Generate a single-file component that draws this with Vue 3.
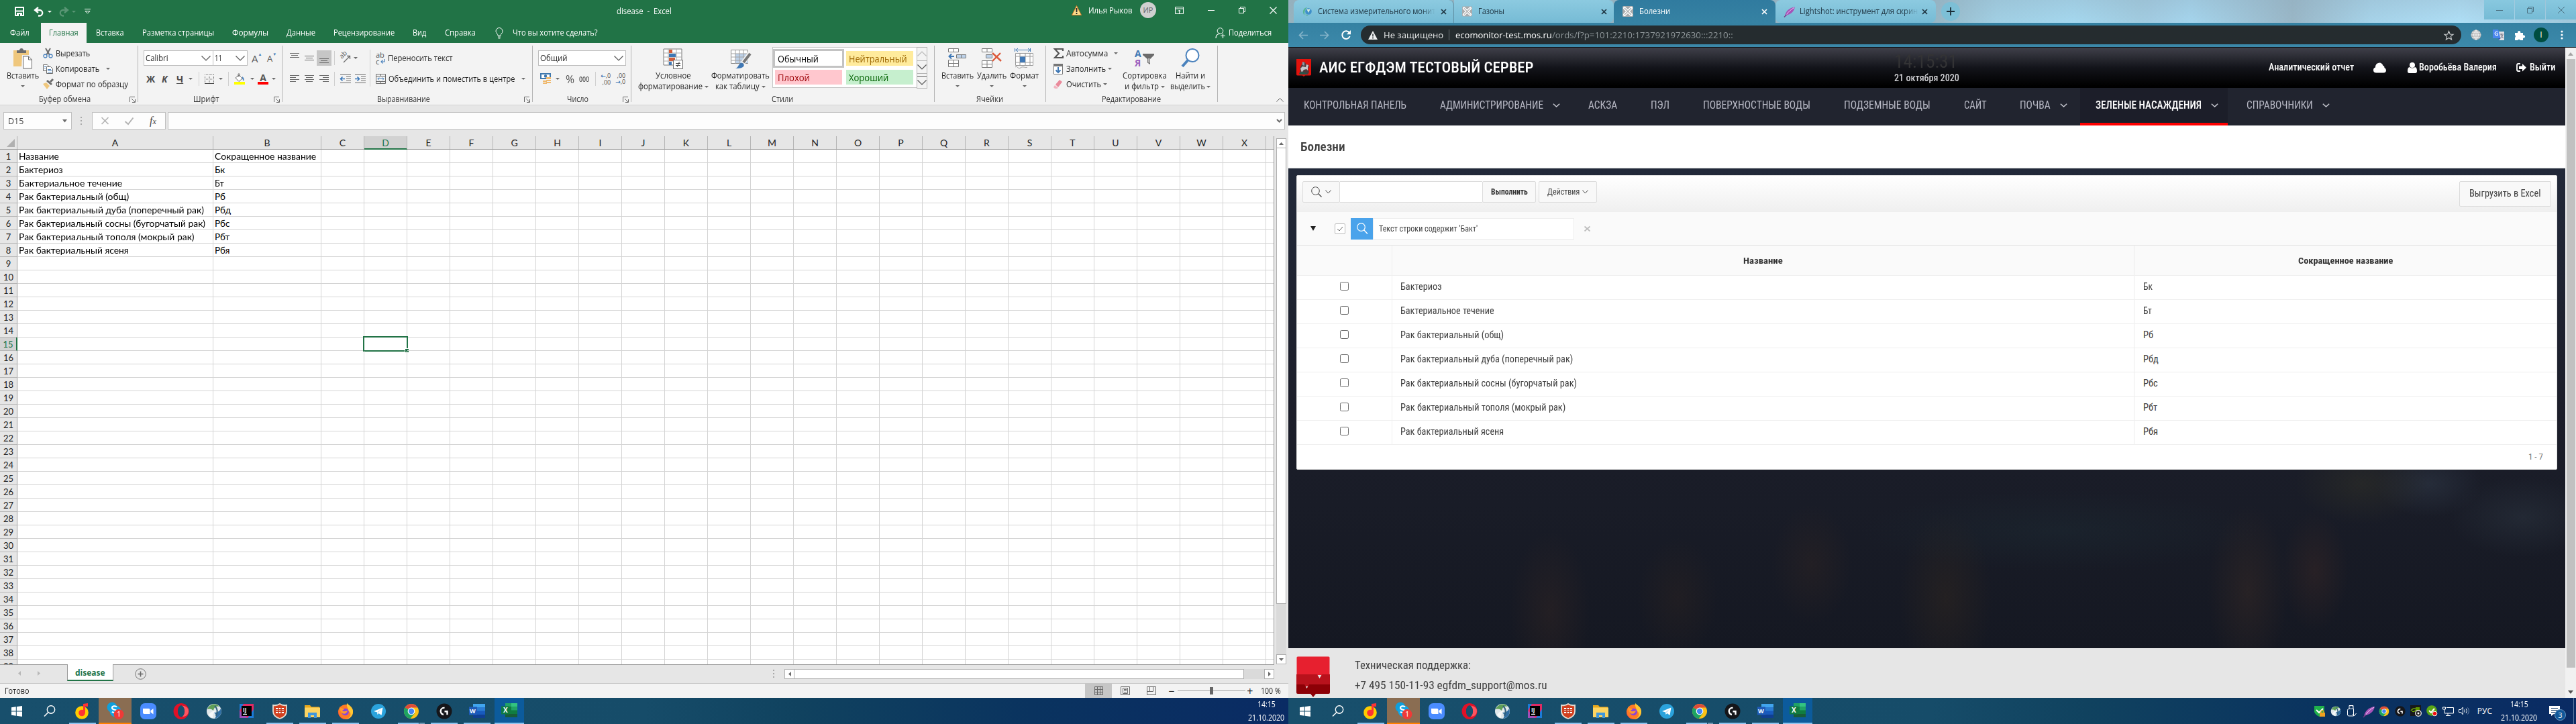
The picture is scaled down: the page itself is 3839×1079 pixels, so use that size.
<script setup>
import { h } from 'vue'

// Scales a piece of text horizontally to the width given in pixels.
const vFit = {
  mounted(el, binding) {
    if (!binding.value) return
    const natural = el.offsetWidth
    el.style.transform = `scaleX(${binding.value / natural})`
    el.style.marginRight = `${binding.value - natural}px`
  }
}

const g = '#6b6b6b'
const lines = (rows, s = g) => rows.map(([x1, x2, y]) => `<path d="M${x1} ${y}H${x2}" stroke="${s}"/>`).join('')
const chromeInner = '<circle cx="12" cy="12" r="11" fill="#fbc116"/><path d="M12 12 2.5 6.4A11 11 0 0 1 21.5 6.5H12z" fill="#dd4b3a"/><path d="M12 12 2.5 6.4A11 11 0 0 0 10.5 23L17 15z" fill="#1da462"/><circle cx="12" cy="12" r="5.4" fill="#fff"/><circle cx="12" cy="12" r="4.2" fill="#4285f4"/>'
const logi = '<circle cx="12" cy="12" r="11.5" fill="#15161a"/><path d="M12.500 7a5 5 0 0 0-1.500 10M12.500 12.300H16.500v5" fill="none" stroke="#fff" stroke-width="2.4"/>'
const swirl = '<circle cx="12" cy="12" r="11" fill="#dfe7ea"/><path d="M2 9C5 1 15-1 20 5c-6-1-8 2-9 6-3-3-6-3-9-2z" fill="#5f9f58"/><path d="M22 8c3 7-2 14-9 15 3-4 2-6-1-9 5 0 8-2 10-6z" fill="#2e6ea3"/><path d="M4 17c4-5 7-6 11-6-4 3-5 6-5 11-3-1-5-3-6-5z" fill="#f6f8f8"/><path d="M13 4c4 4 5 9 2 15" stroke="#33607a" fill="none" stroke-width="2"/>'
const feather = '<path d="M2 16C3 8 9 2 18 1c-1 6-5 11-13 13z" fill="#a552b8"/><path d="M4 14C8 8 12 5 17 2" stroke="#f0d4f5" fill="none"/><path d="M1 17l4-4" stroke="#713883" stroke-width="1.4"/>'
const cross = '<rect width="16" height="16" rx="1.5" fill="#a9abad"/><path d="M3 3l10 10M13 3 3 13" stroke="#fff" stroke-width="4.2" stroke-linecap="round"/><path d="M3 3l10 10M13 3 3 13" stroke="#a9abad" stroke-width="1.3"/>'

const icons = {
  save: [14, 14, '<path d="M1 1h12v12H1z" fill="none" stroke="#fff" stroke-width="2"/><path d="M2 6.5h10" stroke="#fff" stroke-width="2"/><path d="M3 9h8v5H3z" fill="#fff"/><path d="M6 11h2v3H6z" fill="#217346"/>'],
  undo: [16, 15, '<path d="M7 1 2 5l5 4M2.500 5H9a4 4 0 0 1 0 8.500H7" fill="none" stroke="#fff" stroke-width="2.300"/>'],
  redo: [16, 15, '<path d="M9 1l5 4-5 4M13.500 5H7a4 4 0 0 0 0 8.500h1" fill="none" stroke="#5a9675" stroke-width="2.300"/>'],
  qat: [9, 8, '<path d="M0 .5h9" stroke="#fff"/><path d="M1 3.500h7L4.500 7z" fill="none" stroke="#fff"/>'],
  dnW: [6, 3, '<path d="M0 0h6L3 3z" fill="#fff"/>'],
  dnF: [6, 3, '<path d="M0 0h6L3 3z" fill="#5a9675"/>'],
  dn: [6, 3, '<path d="M0 0h6L3 3z" fill="#6b6b6b"/>'],
  dnL: [7, 5, '<path d="M0 0h7L3.500 4.500z" fill="#6b6b6b"/>'],
  upT: [7, 4, '<path d="M0 4h7L3.500 0z" fill="#6b6b6b"/>'],
  dnT: [7, 4, '<path d="M0 0h7L3.500 4z" fill="#6b6b6b"/>'],
  lfT: [4, 7, '<path d="M4 0v7L0 3.500z" fill="#6b6b6b"/>'],
  rtT: [4, 7, '<path d="M0 0v7l4-3.500z" fill="#6b6b6b"/>'],
  lfF: [4, 7, '<path d="M4 0v7L0 3.500z" fill="#b8b8b8"/>'],
  rtF: [4, 7, '<path d="M0 0v7l4-3.500z" fill="#b8b8b8"/>'],
  warn: [15, 15, '<path d="M7.500.5 14.500 14.500H.5z" fill="#fbdc8c" stroke="#d97b24"/><path d="M7.500 4v6M7.500 11v2" stroke="#222" stroke-width="1.800"/>'],
  ribbonOpt: [13, 11, '<path d="M.5.5h12v10H.5zM.5 3h12M6.500 10V5M4.500 7l2-2 2 2" fill="none" stroke="#fff"/>'],
  min: [10, 10, '<path d="M0 5.500h10" stroke="#fff"/>'],
  restore: [10, 10, '<path d="M.5 2.500h7v7h-7zM2.500 2V.5h7v7H8" fill="none" stroke="#fff"/>'],
  close: [11, 11, '<path d="M.5.5l10 10M10.500.5l-10 10" stroke="#fff" stroke-width="1.200"/>'],
  bulb: [12, 17, '<path d="M4 12c0-2.500-3-3.500-3-6.500a5 5 0 0 1 10 0C11 8.500 8 9.500 8 12zM4 14h4M4.500 16h3" fill="none" stroke="#fff"/>'],
  share: [16, 16, '<circle cx="7.500" cy="5" r="4.300" fill="none" stroke="#fff"/><path d="M1 16c0-4 2-6.500 6-6.500M11.500 9v7M8 12.500h7" fill="none" stroke="#fff" stroke-width="1.200"/>'],
  paste: [29, 31, '<path d="M0 3h23v24H0z" fill="#efc77d"/><path d="M5 7V3h4c0-4 6-4 6 0h4v4z" fill="#6b6b6b"/><path d="M13 10h14l1 20H12z" fill="#f3f3f3"/><path d="M14.500 12h8l5 5v13h-13z" fill="#fff" stroke="#6b6b6b"/><path d="M22.500 12v5h5" fill="none" stroke="#6b6b6b"/>'],
  cut: [15, 15, '<path d="M4 0l6 10M11 0 5 10" stroke="#6b6b6b" stroke-width="2"/><circle cx="3.500" cy="11.500" r="2.500" fill="none" stroke="#4a82bd" stroke-width="1.300"/><circle cx="11.500" cy="11.500" r="2.500" fill="none" stroke="#4a82bd" stroke-width="1.300"/>'],
  copy: [15, 14, '<path d="M.5.5h6l2 2v7h-8z" fill="#fff" stroke="#6b6b6b"/><path d="M5.500 3.500h6l3 3v7h-9z" fill="#fff" stroke="#6b6b6b"/><path d="M7 7.500h5M7 9.500h6M7 11.500h6M2 3.500h3M2 5.500h2" stroke="#4a82bd"/>'],
  brush: [16, 15, '<path d="M0 7l5-2 5 5-4 5z" fill="#efc77d"/><path d="M5 3l7 6 2-2-7-6z" fill="#6b6b6b"/><path d="M11 4l4-4" stroke="#6b6b6b" stroke-width="3"/>'],
  launch: [9, 9, '<path d="M.5 8V.5H8M3 3l5 5M8.500 4v4.500H4" fill="none" stroke="#666"/>'],
  chev: [14, 8, '<path d="M.5.5 7 7l6.500-6.500" fill="none" stroke="#555" stroke-width="1.200"/>'],
  chevUpF: [14, 8, '<path d="M.5 7.500 7 1l6.500 6.500" fill="none" stroke="#b9b9b9" stroke-width="1.200"/>'],
  chevUp: [11, 6, '<path d="M.5 5.500 5.500.5l5 5" fill="none" stroke="#555"/>'],
  borders: [14, 14, '<path d="M.5 0v13M13.500 0v13M0 .5h14M7 0v13M0 7h14" stroke="#777" stroke-dasharray="1 1"/><path d="M0 13.500h14" stroke="#444"/>'],
  fill: [16, 16, '<path d="M2 6l5-4 5 5-5 4.500zM6 5V0h2v4" fill="#fff" stroke="#6b6b6b"/><path d="M12 4q4 3 2 7l-2-4z" fill="#4a82bd"/><path d="M0 12h16v4H0z" fill="#ff0"/>'],
  wrap: [7, 9, '<path d="M6 1v4H1m2.500-2.500L1 5l2.500 2.500" fill="none" stroke="#4a82bd" stroke-width="1.200"/>'],
  merge: [15, 15, '<path d="M.5.500h14v14H.5zM.5 3.500h14M.5 11.500h14M7.500 0v3M7.500 12v3" fill="none" stroke="#6b6b6b"/><path d="M3 7.500h9M5 5.500l-2 2 2 2M10 5.500l2 2-2 2" fill="none" stroke="#4a82bd"/>'],
  alT: [14, 8, lines([[0, 14, 0.5], [2, 12, 3.5], [0, 14, 6.5]])],
  alL: [14, 11, lines([[0, 14, 0.5], [0, 9, 3.5], [0, 14, 6.5], [0, 9, 9.5]])],
  alC: [14, 11, lines([[0, 14, 0.5], [2, 12, 3.5], [0, 14, 6.5], [2, 12, 9.5]])],
  alR: [14, 11, lines([[0, 14, 0.5], [5, 14, 3.5], [0, 14, 6.5], [5, 14, 9.5]])],
  indL: [16, 14, lines([[0, 16, 0.5], [9, 16, 3.5], [9, 16, 6.5], [9, 16, 9.5], [0, 16, 12.5]]) + '<path d="M1 6.500h6M3.500 3.500l-3 3 3 3" fill="none" stroke="#3a77b8" stroke-width="1.600"/>'],
  indR: [16, 14, lines([[0, 16, 0.5], [9, 16, 3.5], [9, 16, 6.5], [9, 16, 9.5], [0, 16, 12.5]]) + '<path d="M0 6.500h6M3.500 3.500l3 3-3 3" fill="none" stroke="#3a77b8" stroke-width="1.600"/>'],
  orient: [16, 15, '<path d="M5 14 14.500 4.500M14.500 9V4.500H10" fill="none" stroke="#6b6b6b" stroke-width="1.300"/>'],
  money: [17, 17, '<path d="M0 0h16v9H0z" fill="#3f78ae"/><path d="M2 2h12v5H2z" fill="#fff"/><circle cx="8" cy="4.500" r="2.200" fill="#3f78ae"/><path d="M9 6h7v3H9zM9 10h7v2H9zM4 11h6v2H4zM4 14h6v2H4zM9 13h7v2H9z" fill="#efb96e"/>'],
  cond: [31, 31, '<path d="M1 1h27v24H1z" fill="#fff" stroke="#777"/><path d="M8 1v24M20 1v24M1 7h27M1 13h27M1 19h27" stroke="#aaa"/><path d="M9 2h5v5H9zM9 14h9v5H9z" fill="#d35d3a"/><path d="M9 8h10v5H9zM9 20h4v5H9z" fill="#3f78b5"/><path d="M15.500 17.500h14v13h-14z" fill="#fff" stroke="#6b6b6b"/><path d="M19 22.500h7M19 25.500h7M24.500 20l-3.500 8" stroke="#444"/>'],
  fmtTable: [30, 30, '<path d="M.5 2.500h25v20H.5z" fill="#fff" stroke="#888"/><path d="M7 8h19v14H7z" fill="#bdd1e8"/><path d="M7 3v20M13 3v20M19 3v20M0 8h26M0 13h26M0 18h26" stroke="#a2a2a2"/><path d="M28.500 8 18 22" stroke="#f3f3f3" stroke-width="7"/><path d="M29 8 19 21" stroke="#777" stroke-width="4"/><path d="M6 30c6 0 5-8 10-8 4 0 5 4 2 6s-7 2-12 2z" fill="#3f78b5"/>'],
  insCells: [28, 29, '<path d="M.5.500h15v5H.5zM8 0v6M.5 17.500h15v10H.5zM8 17v11M0 22.500h16" fill="#fff" stroke="#777"/><path d="M12.500 9.500h14v5h-14z" fill="#bdd1e8" stroke="#777"/><path d="M19.500 9v6" stroke="#777"/><path d="M2 12h7M5 8.500 1.500 12 5 15.500" fill="none" stroke="#3f78b5" stroke-width="2"/>'],
  delCells: [30, 29, '<path d="M.5.500h15v5H.5zM8 0v6M.5 18.500h15v10H.5zM8 18v11M0 23.500h16" fill="#fff" stroke="#777"/><path d="M6.500 9.500h9v5h-9z" fill="#bdd1e8" stroke="#777"/><path d="M16 7l13 12M28 7 16 19" stroke="#dc5a3c" stroke-width="2.400"/>'],
  fmtCells: [29, 31, '<path d="M1 2.500h22M5 0 2 2.500 5 5M20 0l3 2.500L20 5M.5 0v5M23.500 0v5" fill="none" stroke="#3f78b5"/><path d="M1.500 7.500h26v18h-26zM1.500 12h26M1.500 21h26M8 7v19M16 7v19M23 7v19" fill="#fff" stroke="#999"/><path d="M8 12.500h8V21H8z" fill="#3f78b5"/><path d="M1 28c3-3 4 4 8 1s7 1 10-1" fill="none" stroke="#999"/>'],
  sigma: [15, 15, '<path d="M14 4V1H2l6 6.500L2 14h12v-3" fill="none" stroke="#555" stroke-width="2.200"/>'],
  fillDn: [14, 16, '<path d="M.5.500h13v15H.5z" fill="#fff" stroke="#777"/><path d="M0 0h14v4H0z" fill="#777"/><path d="M7 5v8M3.500 9.500 7 13l3.500-3.500" fill="none" stroke="#3f78b5" stroke-width="2"/>'],
  erase: [15, 14, '<path d="M3 7 9 0l4 3-6 8z" fill="#ea8a9b"/><path d="M2 8l5 4-2 1H2L0 11z" fill="#f2b3bf"/>'],
  sortF: [30, 29, '<path d="M12 8h17v2l-6 6v8l-4-2.500V16l-7-6z" fill="#6b6b6b"/><path d="M20.500 15h1.500v7l-1.500-1z" fill="#f3f3f3"/>'],
  find: [28, 29, '<circle cx="17" cy="10.500" r="9.500" fill="#fff" stroke="#4a82bd" stroke-width="2"/><path d="M10.500 17.500 2 27" stroke="#4a82bd" stroke-width="4"/>'],
  xg: [11, 10, '<path d="M.5 0l10 10M10.500 0l-10 10" stroke="#b4b4b4" stroke-width="1.700"/>'],
  chk: [13, 11, '<path d="M.5 6 5 10 12.500.5" fill="none" stroke="#b4b4b4" stroke-width="2"/>'],
  vb: [9, 5, '<path d="M1 0l3.500 3.500L8 0" fill="none" stroke="#6b6b6b" stroke-width="2"/>'],
  plusC: [17, 17, '<circle cx="8.500" cy="8.500" r="7.800" fill="none" stroke="#777"/><path d="M8.500 4.500v8M4.500 8.500h8" stroke="#666" stroke-width="1.600"/>'],
  vGrid: [13, 13, '<path d="M.5.500h12v12H.5zM.5 4.500h12M.5 8.500h12M4.500.5v12M8.500.5v12" fill="none" stroke="#666"/>'],
  vPage: [14, 13, '<path d="M.5.500h13v12H.5zM3.500 2.500h7v8h-7z" fill="none" stroke="#666"/><path d="M5 4.500h4M5 6.500h4M5 8.500h4" stroke="#666"/>'],
  vBreak: [14, 13, '<path d="M.5.500h13v12H.5zM4.500.5v7M9.500.5v7H.5" fill="none" stroke="#666"/>'],
  corner: [12, 12, '<path d="M12 0v12H0z" fill="#b0b0b0"/>'],
  // taskbar
  start: [16, 16, '<path d="M0 2.300 6.800 1.300V7.500H0zM7.800 1.200 16 0v7.500H7.800zM0 8.500h6.800v6.200L0 13.700zM7.800 8.500H16V16l-8.200-1.200z" fill="#fff"/>'],
  search: [18, 17, '<circle cx="11" cy="6.500" r="5.700" fill="none" stroke="#fff" stroke-width="1.400"/><path d="M7 10.500 1 16.500" stroke="#fff" stroke-width="1.600"/>'],
  music: [22, 24, '<circle cx="10" cy="14" r="9.800" fill="#fc0"/><circle cx="10" cy="14.500" r="4.800" fill="#f33"/><path d="M12 15V1l7-1v5h-4v10z" fill="#f33"/>'],
  skype: [26, 26, '<circle cx="8" cy="8" r="7.500" fill="#0f9fdc"/><circle cx="13" cy="14" r="8.500" fill="#10a7e8"/><path d="M15 7.500c-2-2-7-1.500-7 1.500 0 3.500 7 2 7 5 0 2.500-5 3-7 .8" fill="none" stroke="#fff" stroke-width="2.200"/><circle cx="18" cy="18.500" r="7.500" fill="#f03a37"/>'],
  zoom: [24, 24, '<rect width="24" height="24" rx="7" fill="#4a8cff"/><path d="M4 8h8.500q2 0 2 2v6H6q-2 0-2-2zM15.500 11l4-3v8.500l-4-3z" fill="#fff"/>'],
  opera: [24, 24, '<path fill-rule="evenodd" d="M12 0a11.500 12 0 1 0 .01 0zM12 3.500a5 8.500 0 1 1-.01 0z" fill="#e01127"/><path d="M13.500 3.500q7.500 8.500 0 17 9.500-1 9.500-8.500t-9.500-8.500z" fill="#ff5560"/><path d="M12 3.500a5 8.500 0 1 1-.01 0z" fill="#17506e"/>'],
  swirl: [24, 24, swirl],
  ij: [21, 21, '<path d="M0 0h21v21H0z" fill="#e02a63"/><path d="M0 10 6 0H0zM12 21h9V8z" fill="#1b7bd8"/><path d="M0 10v11h12z" fill="#a04fb8"/><path d="M3 3h15v15H3z" fill="#000"/><path d="M5 15.500h6" stroke="#fff" stroke-width="1.300"/>'],
  forti: [22, 24, '<path d="M1 3Q7 4 11 1q4 3 10 2v9q0 8-10 11Q1 20 1 12z" fill="#d2401f" stroke="#e5ddd2" stroke-width="1.800"/><path d="M5 7h12v8H5z" fill="#fff"/><path d="M5 9.700h12M5 12.300h12M9 7v8M13 7v8" stroke="#c8391b" stroke-width="1.500"/>'],
  folder: [23, 20, '<path d="M0 1h8l2 2.500h12V19H0z" fill="#e8a81c"/><path d="M0 4.500h23V19H0z" fill="#fcd462"/><path d="M5 20v-8h13v8h-4v-4H9v4z" fill="#3f97dd"/>'],
  firefox: [24, 24, '<circle cx="12" cy="13" r="11" fill="#ff7a25"/><path d="M14 0c3 3 8 5 9 11 1 7-5 13-11 13 8-2 10-9 4-13 0-4-3-6-2-11z" fill="#ffc832"/><circle cx="11.500" cy="13" r="5.300" fill="#8a45d8"/><path d="M1 10c0 8 4 13 11 13.500C5 24 0 18 1 10z" fill="#f0304f"/><path d="M3 5c1 3 4 2 7 4l-3 2c2 2 5 1 8 0-2 8-12 6-12-6z" fill="#ff9a2b"/>'],
  telegram: [22, 22, '<circle cx="11" cy="11" r="11" fill="#2ba3dc"/><path d="M4 11 17.500 5.500 15.500 17l-4-3-2 2-.5-3.500z" fill="#fff"/><path d="M9 12.500 15 8l-4 5z" fill="#b4d9ed"/>'],
  chrome: [24, 24, chromeInner],
  logi: [24, 24, logi],
  word: [24, 21, '<path d="M6 0h18v6H6z" fill="#41a5ee"/><path d="M6 5h18v6H6z" fill="#2b7cd3"/><path d="M6 10.500h18V16H6z" fill="#185abd"/><path d="M6 16h18v5H6z" fill="#103f91"/><path d="M0 4.500h12v12H0z" fill="#1e5bb8"/>'],
  excel: [24, 21, '<path d="M6 0h9v6H6z" fill="#21a366"/><path d="M15 0h9v6h-9z" fill="#33c481"/><path d="M6 5h9v11H6z" fill="#107c41"/><path d="M15 5h9v6h-9z" fill="#21a366"/><path d="M15 10.500h9V16h-9z" fill="#107c41"/><path d="M6 16h18v5H6z" fill="#185c37"/><path d="M0 4.500h12v12H0z" fill="#0f7a40"/>'],
  shield: [16, 16, '<path d="M0 0h15v9q-2 5-7.500 7Q2 14 0 9z" fill="#20b14b"/><path d="M3 6l4 4 6-6" fill="none" stroke="#fff" stroke-width="2"/><path d="M8 10h8v6H8z" fill="#f0a020"/><path d="M10 10V8q2-2 4 0v2" fill="none" stroke="#f0a020" stroke-width="1.300"/>'],
  usb: [14, 17, '<path d="M2.500 5.500h7V16h-7q-2 0-2-2V7.500q0-2 2-2zM3 5.500v-5h6v5M5 2.500h1M7 2.500h1" fill="none" stroke="#fff"/><path d="M8 13l2.500 3 3-4" fill="none" stroke="#fff"/>'],
  feather: [16, 16, feather],
  nvidia: [17, 17, '<path d="M0 0h16v16H0z" fill="#17181a"/><path d="M1 8q4-5 8-2-3 5-6 3" stroke="#76b900" fill="none" stroke-width="1.300"/><path d="M8 3h6v6H8z" fill="#5e9400"/><circle cx="12" cy="12" r="4.300" fill="#222" stroke="#fff" stroke-width="1.200"/><circle cx="12" cy="12" r="1.500" fill="#fff"/>'],
  skTray: [17, 17, '<circle cx="8" cy="8" r="7.800" fill="#5aa716"/><path d="M4 8l3 3 5-6" stroke="#fff" fill="none" stroke-width="2"/><circle cx="12.500" cy="12.500" r="3.300" fill="#f00e0e" stroke="#fff"/>'],
  pc: [17, 14, '<path d="M6 1.500h10.500V10H3V6M8 10v3M5 13.500h7" fill="none" stroke="#fff"/><path d="M.5 1h4v3h-4zM2.500 4v2" fill="none" stroke="#fff"/>'],
  sound: [17, 13, '<path d="M.5 4.500h3l3-3.500v11l-3-3.500h-3z" fill="none" stroke="#fff"/><path d="M8.500 4.500q1.500 2 0 4M11 3q3 3.500 0 7" fill="none" stroke="#fff"/><path d="M13.500 1.500q4 5 0 10" fill="none" stroke="#7893b4"/>'],
  notif: [16, 15, '<path d="M0 0h16v12H7l-4 3v-3H0z" fill="#fff"/><path d="M3 3.500h10M3 6.500h10M3 9.500h10" stroke="#123a68"/>'],
  // browser
  eco: [14, 15, '<path d="M7 1C1 2-1 8 3 13c0-4 0-8 4-12z" fill="#55b596"/><circle cx="9" cy="7" r="4.800" fill="#3e8fca"/><path d="M6 3q3 2 6 0l-3 6z" fill="#d9ecdc"/><path d="M4 9q1 5 5 5-4-1-5-5z" fill="#2f9b45"/>'],
  cross: [16, 16, cross],
  tx: [9, 9, '<path d="M1 1l7 7M8 1 1 8" stroke="#1d3340" stroke-width="1.700"/>'],
  txW: [9, 9, '<path d="M1 1l7 7M8 1 1 8" stroke="#fff" stroke-width="1.700"/>'],
  plus: [12, 12, '<path d="M6 0v12M0 6h12" stroke="#1a2c36" stroke-width="1.800"/>'],
  back: [14, 13, '<path d="M14 6.500H1.500M7 1 1.500 6.500 7 12" fill="none" stroke="#86b5ca" stroke-width="1.700"/>'],
  fwd: [14, 13, '<path d="M0 6.500h12.500M7 1l5.500 5.500L7 12" fill="none" stroke="#86b5ca" stroke-width="1.700"/>'],
  reload: [14, 14, '<path d="M12 4a5.800 5.800 0 1 0 .6 5" fill="none" stroke="#fff" stroke-width="2"/><path d="M14 0v6.200H7.800z" fill="#fff"/>'],
  tri: [14, 13, '<path d="M7 0l7 13H0z" fill="#eef0f0"/><path d="M7 4.500v4M7 9.500v2" stroke="#252c2f" stroke-width="1.500"/>'],
  star: [15, 15, '<path d="M7.500 1.500 9.300 6l4.700.3-3.600 3 1.200 4.600-4.100-2.500-4.100 2.500 1.200-4.600L1 6.300 5.700 6z" fill="none" stroke="#c9cccd" stroke-width="1.200"/>'],
  globe: [16, 16, '<circle cx="8" cy="8" r="7.500" fill="#b5b5b5"/><path d="M8 .5v15M.5 8h15M2 4h12M2 12h12M8 .5q-7 7.500 0 15M8 .5q7 7.500 0 15" fill="none" stroke="#fff" stroke-width=".8"/>'],
  trans: [17, 17, '<path d="M7 3h10v13H9z" fill="#dfe1e5"/><path d="M0 0h8l3.500 13H0z" fill="#4a86ee"/><path d="M11 7h5M13.500 6v2M15 8q-1 4-4 5M12 8q1 3 4 5" stroke="#667" fill="none" stroke-width=".9"/><path d="M7.500 4a2.600 2.600 0 1 0 0 4V6.300H5.300" fill="none" stroke="#fff" stroke-width="1.100"/><path d="M8 13h3.500L9 16z" fill="#2c56b5"/>'],
  puzzle: [15, 15, '<path d="M0 4h4.200a2.200 2.200 0 1 1 4 0H12v3.500a2.200 2.200 0 1 1 0 4V15H8a2.200 2.200 0 0 0-4 0H0v-4a2.200 2.200 0 0 0 0-3.700z" fill="#fff"/>'],
  dots: [4, 14, '<circle cx="2" cy="2" r="1.600" fill="#fff"/><circle cx="2" cy="7" r="1.600" fill="#fff"/><circle cx="2" cy="12" r="1.600" fill="#fff"/>'],
  wMin: [10, 10, '<path d="M0 5.500h10" stroke="#4c7080"/>'],
  wRes: [10, 10, '<path d="M.5 2.500h7v7h-7zM2.500 2V.5h7v7H8" fill="none" stroke="#4c7080"/>'],
  wCls: [10, 10, '<path d="M0 0l10 10M10 0 0 10" stroke="#4c7080"/>'],
  crest: [22, 26, '<path d="M0 0h22v23q0 1.500-2 1.500h-7L11 26l-2-1.500H2q-2 0-2-1.500z" fill="#e3120c"/><path d="M4 22q3-5 1-8l3-6 2-4 3 1 2 4 3-1 1 4-2 3 2 4-2 4H8z" fill="#4f3a3c"/><path d="M6 14l3-3 5 1 1-4 3 1-1 4v4l-2-2-4 1-3 4-1-3z" fill="#c5c6ca"/><path d="M9 4l3 1v5l-3-1z" fill="#8d99a6"/><path d="M4 21q5-4 10 0l3-1-2 3H6z" fill="#26544a"/>'],
  cloud: [19, 16, '<path d="M4.500 15.500Q0 15.500 0 11.500 0 8 3 7.500 3 1 9 .5q4 0 5.500 4.500 2 0 2 3 2.500 1 2.500 3.800 0 3.700-4 3.700z" fill="#fff"/>'],
  person: [14, 16, '<circle cx="7" cy="4" r="4" fill="#fff"/><path d="M0 13q0-6 3-6 4 3 8 0 3 0 3 6 0 3-2.500 3h-9Q0 16 0 13z" fill="#fff"/>'],
  exit: [15, 14, '<path d="M6 1H3Q1 1 1 3v7q0 2 2 2h3" fill="none" stroke="#fff" stroke-width="1.800"/><path d="M4 4.500h5V1l6 5.800-6 5.700V9H4z" fill="#fff"/>'],
  navChev: [11, 6, '<path d="M.8.8 5.500 5 10.200.8" fill="none" stroke="#c9cad2" stroke-width="1.500"/>'],
  mag: [16, 16, '<circle cx="6.500" cy="6.500" r="5.800" fill="none" stroke="#444"/><path d="M10.500 10.500 15.500 15.500" stroke="#444" stroke-width="1.200"/>'],
  magW: [16, 17, '<circle cx="6.500" cy="6.500" r="5.800" fill="none" stroke="#fff" stroke-width="1.200"/><path d="M10.500 10.500 16 16.500" stroke="#fff" stroke-width="1.400"/>'],
  chevS: [9, 6, '<path d="M.5.5l4 4.500 4-4.500" fill="none" stroke="#444"/>'],
  triD: [8, 7, '<path d="M0 0h8L4 7z" fill="#222"/>'],
  cbOn: [16, 16, '<rect x=".5" y=".5" width="15" height="15" rx="1.500" fill="#fff" stroke="#b8b8b8"/><path d="M4 8l3 3 5-6" fill="none" stroke="#666"/>'],
  cb: [13, 13, '<rect x=".5" y=".5" width="12" height="12" rx="1.800" fill="#fff" stroke="#6b6b6b"/>'],
  rx: [9, 8, '<path d="M.5.5l8 7M8.500.5l-8 7" stroke="#bdbdbd" stroke-width="1.700"/>'],
  mosLogo: [50, 61, '<path d="M.5 2q0-1.500 1.500-1.500h46q1.500 0 1.500 1.500v26H.5z" fill="#e7202f"/><path d="M0 27h31l3.500 6 3.500-6h12v18H0z" fill="#b8121c"/><path d="M0 42h12l3.500 6 3.500-6h31v12q0 2-2 2H29l-4 5-4-5H2q-2 0-2-2z" fill="#8c0006"/>'],
  sbUp: [8, 5, '<path d="M0 5h8L4 0z" fill="#a3a3a3"/>'],
  sbDn: [8, 5, '<path d="M0 0h8L4 5z" fill="#505050"/>']
}

const Icon = (props) => {
  const [w, hh, inner] = icons[props.n]
  return h('svg', {
    width: props.w || w, height: props.h || hh, viewBox: `0 0 ${w} ${hh}`,
    innerHTML: inner, style: 'display:block;flex:none;overflow:visible'
  })
}
Icon.props = ['n', 'w', 'h']

const ribbonTabs = [
  ['Файл', 29], ['Главная', 44], ['Вставка', 42], ['Разметка страницы', 107], ['Формулы', 54],
  ['Данные', 43], ['Рецензирование', 91], ['Вид', 20], ['Справка', 46]
]

const columns = 'ABCDEFGHIJKLMNOPQRSTUVWX'.split('')
const sheet = [
  ['Название', 60, 'Сокращенное название', 151],
  ['Бактериоз', 66, 'Бк', 15],
  ['Бактериальное течение', 154, 'Бт', 14],
  ['Рак бактериальный (общ)', 164, 'Рб', 16],
  ['Рак бактериальный дуба (поперечный рак)', 276, 'Рбд', 24],
  ['Рак бактериальный сосны (бугорчатый рак)', 278, 'Рбс', 22],
  ['Рак бактериальный тополя (мокрый рак)', 262, 'Рбт', 22],
  ['Рак бактериальный ясеня', 164, 'Рбя', 23]
]

const apps = [
  { n: 'start' }, { n: 'search' }, { n: 'music', on: 1 }, { n: 'skype', c: 'alert', badge: 1 }, { n: 'zoom' },
  { n: 'opera' }, { n: 'swirl' }, { n: 'ij', t: 'IJ' }, { n: 'forti', on: 1 }, { n: 'folder', on: 1 }, { n: 'firefox', on: 1 },
  { n: 'telegram' }, { n: 'chrome', on: 1, c: 'multi' }, { n: 'logi', on: 1 }, { n: 'word', on: 1, t: 'W' }, { n: 'excel', c: 'current', t: 'X' }
]
const tray = ['shield', 'swirl', 'usb', 'feather', 'chrome', 'logi', 'nvidia', 'skTray', 'pc', 'sound']

const nav = [
  ['КОНТРОЛЬНАЯ ПАНЕЛЬ', 153], ['АДМИНИСТРИРОВАНИЕ', 154, 1], ['АСКЗА', 43], ['ПЭЛ', 28], ['ПОВЕРХНОСТНЫЕ ВОДЫ', 160],
  ['ПОДЗЕМНЫЕ ВОДЫ', 129], ['САЙТ', 34], ['ПОЧВА', 46, 1], ['ЗЕЛЕНЫЕ НАСАЖДЕНИЯ', 158, 1], ['СПРАВОЧНИКИ', 99, 1]
]
const diseases = [
  ['Бактериоз', 62, 'Бк', 14], ['Бактериальное течение', 140, 'Бт', 13], ['Рак бактериальный (общ)', 154, 'Рб', 15],
  ['Рак бактериальный дуба (поперечный рак)', 257, 'Рбд', 23], ['Рак бактериальный сосны (бугорчатый рак)', 263, 'Рбс', 22],
  ['Рак бактериальный тополя (мокрый рак)', 246, 'Рбт', 21], ['Рак бактериальный ясеня', 154, 'Рбя', 22]
]
</script>

<template>
  <div class="desktop">
    <div class="screen left">
      <div class="excel">
        <div class="titlebar">
          <div class="qat">
            <Icon n="save" /><Icon n="undo" class="m14" /><Icon n="dnW" class="m5" />
            <Icon n="redo" class="m10" /><Icon n="dnF" class="m4" /><Icon n="qat" class="m13" />
          </div>
          <div class="doc"><span v-fit="82" class="t">disease &nbsp;-&nbsp; Excel</span></div>
          <div class="win">
            <Icon n="warn" /><span v-fit="66" class="t user">Илья Рыков</span><span class="ava">ИР</span>
            <div class="wbtns"><Icon n="ribbonOpt" /><Icon n="min" /><Icon n="restore" /><Icon n="close" /></div>
          </div>
        </div>
        <div class="tabs">
          <div v-for="(r, i) in ribbonTabs" :key="r[0]" class="tab" :class="{ on: i === 1, first: i === 0 }"><span v-fit="r[1]" class="t">{{ r[0] }}</span></div>
          <div class="tell"><Icon n="bulb" /><span v-fit="127" class="t">Что вы хотите сделать?</span></div>
          <div class="share"><Icon n="share" /><span v-fit="64" class="t">Поделиться</span></div>
        </div>

        <div class="ribbon">
          <div class="grp g1">
            <div class="body">
              <div class="big paste"><div class="ico"><Icon n="paste" /></div><span v-fit="48" class="t">Вставить</span><div class="arr"><Icon n="dn" /></div></div>
              <div class="stack">
                <div class="row"><div class="si"><Icon n="cut" /></div><span v-fit="51" class="t">Вырезать</span></div>
                <div class="row"><div class="si"><Icon n="copy" /></div><span v-fit="65" class="t">Копировать</span><Icon n="dn" class="m10" /></div>
                <div class="row"><div class="si"><Icon n="brush" /></div><span v-fit="108" class="t">Формат по образцу</span></div>
              </div>
            </div>
            <div class="lab"><span v-fit="77" class="t">Буфер обмена</span><Icon n="launch" class="la" /></div>
          </div>

          <div class="grp g2">
            <div class="body col">
              <div class="line l1">
                <div class="combo c1"><span v-fit="34" class="t">Calibri</span><Icon n="chev" /></div>
                <div class="combo c2"><span v-fit="11" class="t">11</span><Icon n="chev" /></div>
                <span class="biga">А<i>▲</i></span><span class="biga sm">А<i>▼</i></span>
              </div>
              <div class="line l2">
                <b class="fb w23">Ж</b><b class="fb w22 it">К</b><b class="fb w18 un">Ч</b><Icon n="dn" /><s class="m9" />
                <Icon n="borders" class="m8" /><Icon n="dn" class="m7" /><s class="m8" /><Icon n="fill" class="m8" /><Icon n="dn" class="m8" />
                <span class="fc">А</span><Icon n="dn" class="m5" />
              </div>
            </div>
            <div class="lab"><span v-fit="39" class="t">Шрифт</span><Icon n="launch" class="la" /></div>
          </div>

          <div class="grp g3">
            <div class="body">
              <div class="col alg">
                <div class="line l1">
                  <span class="ab upper"><Icon n="alT" /></span><span class="ab"><Icon n="alT" /></span><span class="ab sel"><Icon n="alT" /></span><s class="m4" />
                  <span class="ori"><Icon n="orient" /><em>ab</em></span><Icon n="dn" class="m4" />
                </div>
                <div class="line l2">
                  <span class="ab"><Icon n="alL" /></span><span class="ab"><Icon n="alC" /></span><span class="ab"><Icon n="alR" /></span><s class="m4" />
                  <Icon n="indL" class="m8" /><Icon n="indR" class="m6" />
                </div>
              </div>
              <s class="tall" />
              <div class="col">
                <div class="line l1 m8"><span class="wrp"><em>ab</em><em>c</em><Icon n="wrap" /></span><span v-fit="97" class="t">Переносить текст</span></div>
                <div class="line l2 m8"><Icon n="merge" /><span v-fit="188" class="t m4">Объединить и поместить в центре</span><Icon n="dn" class="m10" /></div>
              </div>
            </div>
            <div class="lab"><span v-fit="79" class="t">Выравнивание</span><Icon n="launch" class="la" /></div>
          </div>

          <div class="grp g4">
            <div class="body col">
              <div class="line l1"><div class="combo c3"><span v-fit="41" class="t">Общий</span><Icon n="chev" /></div></div>
              <div class="line l2">
                <Icon n="money" class="m11" /><Icon n="dn" class="m6" /><span v-fit="13" class="t pct">%</span><span v-fit="15" class="t ooo">000</span><s class="m9" />
                <span class="dec"><i>←</i>,0<br>,00</span><span class="dec d2">,00<br><i>→</i>,0</span>
              </div>
            </div>
            <div class="lab"><span v-fit="32" class="t">Число</span><Icon n="launch" class="la" /></div>
          </div>

          <div class="grp g5">
            <div class="body">
              <div class="big b1"><div class="ico"><Icon n="cond" /></div><span v-fit="53" class="t">Условное</span><div class="two"><span v-fit="96" class="t">форматирование</span><Icon n="dn" class="m3" /></div></div>
              <div class="big b2"><div class="ico"><Icon n="fmtTable" /></div><span v-fit="87" class="t">Форматировать</span><div class="two"><span v-fit="66" class="t">как таблицу</span><Icon n="dn" class="m3" /></div></div>
              <div class="gallery">
                <div class="styles">
                  <div class="st normal"><span v-fit="61" class="t">Обычный</span></div><div class="st neutral"><span v-fit="87" class="t">Нейтральный</span></div>
                  <div class="st bad"><span v-fit="48" class="t">Плохой</span></div><div class="st good"><span v-fit="59" class="t">Хороший</span></div>
                </div>
                <div class="gs"><div><Icon n="chevUpF" /></div><div><Icon n="chev" /></div><div class="more"><Icon n="chev" /></div></div>
              </div>
            </div>
            <div class="lab nl"><span v-fit="32" class="t">Стили</span></div>
          </div>

          <div class="grp g6">
            <div class="body">
              <div class="big w48"><div class="ico"><Icon n="insCells" /></div><span v-fit="48" class="t">Вставить</span><div class="arr"><Icon n="dn" /></div></div>
              <div class="big w44"><div class="ico"><Icon n="delCells" /></div><span v-fit="44" class="t">Удалить</span><div class="arr"><Icon n="dn" /></div></div>
              <div class="big w43"><div class="ico"><Icon n="fmtCells" /></div><span v-fit="43" class="t">Формат</span><div class="arr"><Icon n="dn" /></div></div>
            </div>
            <div class="lab nl"><span v-fit="40" class="t">Ячейки</span></div>
          </div>

          <div class="grp g7">
            <div class="body">
              <div class="stack s7">
                <div class="row"><div class="si"><Icon n="sigma" /></div><span v-fit="62" class="t">Автосумма</span><Icon n="dn" class="m9" /></div>
                <div class="row"><div class="si"><Icon n="fillDn" /></div><span v-fit="59" class="t">Заполнить</span><Icon n="dn" class="m3" /></div>
                <div class="row"><div class="si"><Icon n="erase" /></div><span v-fit="52" class="t">Очистить</span><Icon n="dn" class="m3" /></div>
              </div>
              <div class="big b3"><div class="ico srt"><em>А</em><em>Я</em><Icon n="sortF" /></div><span v-fit="66" class="t">Сортировка</span><div class="two"><span v-fit="51" class="t">и фильтр</span><Icon n="dn" class="m3" /></div></div>
              <div class="big b4"><div class="ico"><Icon n="find" /></div><span v-fit="44" class="t">Найти и</span><div class="two"><span v-fit="52" class="t">выделить</span><Icon n="dn" class="m3" /></div></div>
            </div>
            <div class="lab nl"><span v-fit="88" class="t">Редактирование</span></div>
          </div>
          <div class="collapse"><Icon n="chevUp" /></div>
        </div>

        <div class="fbar">
          <div class="name"><span v-fit="23" class="t">D15</span><Icon n="dnL" /></div>
          <div class="vdots"><u /><u /><u /></div>
          <div class="fbtns"><Icon n="xg" /><Icon n="chk" /><span class="fx">f<small>x</small></span></div>
          <div class="finput"><Icon n="vb" /></div>
        </div>

        <div class="gridwrap">
          <div class="grid">
            <div class="hrow">
              <div class="cnr"><Icon n="corner" /></div>
              <div v-for="c in columns" :key="c" class="hc" :class="['k' + c, { sel: c === 'D' }]">{{ c }}</div>
            </div>
            <div v-for="r in 39" :key="r" class="grow">
              <div class="rh" :class="{ sel: r === 15 }">{{ r }}</div>
              <div v-for="c in columns" :key="c" class="cell" :class="'k' + c">
                <span v-if="sheet[r - 1] && c === 'A'" v-fit="sheet[r - 1][1]" class="t">{{ sheet[r - 1][0] }}</span>
                <span v-if="sheet[r - 1] && c === 'B'" v-fit="sheet[r - 1][3]" class="t">{{ sheet[r - 1][2] }}</span>
                <div v-if="r === 15 && c === 'D'" class="cursor" />
              </div>
              <div class="cell rest" />
            </div>
          </div>
          <div class="vs"><div class="sb"><Icon n="upT" /></div><div class="vthumb" /><div class="vtrack" /><div class="sb"><Icon n="dnT" /></div></div>
        </div>

        <div class="sheets">
          <Icon n="lfF" class="nv1" /><Icon n="rtF" class="nv2" />
          <div class="stab"><span v-fit="45" class="t">disease</span></div>
          <Icon n="plusC" class="plusc" />
          <div class="vdots hd"><u /><u /><u /></div>
          <div class="hs"><div class="sb"><Icon n="lfT" /></div><div class="hthumb" /><div class="htrack" /><div class="sb"><Icon n="rtT" /></div></div>
        </div>
        <div class="status">
          <span v-fit="36" class="t">Готово</span>
          <div class="views"><div class="on"><Icon n="vGrid" /></div><div><Icon n="vPage" /></div><div><Icon n="vBreak" /></div></div>
          <span class="pm">−</span><div class="slider"><u /></div><span class="pm">+</span><span v-fit="30" class="t zm">100 %</span>
        </div>
      </div>
      <div class="taskbar">
        <div v-for="a in apps" :key="a.n" class="app" :class="[a.c, { run: a.on }]">
          <Icon :n="a.n" /><span v-if="a.t" class="lt" :class="'lt-' + a.n">{{ a.t }}</span><span v-if="a.badge" class="badge">{{ a.badge }}</span>
        </div>
        <div class="clock end"><span v-fit="27" class="t">14:15</span><span v-fit="54" class="t">21.10.2020</span></div>
      </div>
    </div>

    <div class="screen right">
      <div class="chrome">
        <div class="strip">
          <div class="ct a"><Icon n="eco" /><span class="clip w175"><span v-fit="175" class="t">Система измерительного монит</span></span><Icon n="tx" class="x" /></div>
          <div class="ct b"><Icon n="cross" w="15" /><span class="clip"><span v-fit="39" class="t">Газоны</span></span><Icon n="tx" class="x" /></div>
          <div class="ct act"><Icon n="cross" /><span class="clip"><span v-fit="46" class="t">Болезни</span></span><Icon n="txW" class="x" /></div>
          <div class="ct d"><Icon n="feather" w="15" /><span class="clip w177"><span v-fit="176" class="t">Lightshot: инструмент для скрин</span></span><Icon n="tx" class="x" /></div>
          <div class="newtab"><Icon n="plus" /></div>
          <div class="wb"><div><Icon n="wMin" /></div><div><Icon n="wRes" /></div><div><Icon n="wCls" /></div></div>
        </div>
        <div class="bar">
          <Icon n="back" /><Icon n="fwd" class="m18" /><Icon n="reload" class="m18" />
          <div class="url">
            <Icon n="tri" /><span v-fit="89" class="t ns">Не защищено</span><s />
            <span v-fit="144" class="t host">ecomonitor-test.mos.ru</span><span v-fit="270" class="t path">/ords/f?p=101:2210:1737921972630:::2210::</span>
            <Icon n="star" class="star" />
          </div>
          <Icon n="globe" class="m14" /><Icon n="trans" class="m17" /><Icon n="puzzle" class="m16" /><span class="prof">I</span><Icon n="dots" class="m18" />
        </div>
        <div class="view">
          <div class="page">
            <div class="top">
              <Icon n="crest" /><span v-fit="319" class="t ttl">АИС ЕГФДЭМ ТЕСТОВЫЙ СЕРВЕР</span>
              <div class="when"><span v-fit="94" class="t tm">14:15:31</span><span v-fit="97" class="t dt">21 октября 2020</span></div>
              <div class="usr"><span v-fit="127" class="t">Аналитический отчет</span><Icon n="cloud" /><Icon n="person" /><span v-fit="116" class="t">Воробьёва Валерия</span><Icon n="exit" /><span v-fit="38" class="t">Выйти</span></div>
            </div>
            <div class="nav">
              <div v-for="(n, i) in nav" :key="n[0]" class="ni" :class="{ on: i === 8, ch: n[2] }"><span v-fit="n[1]" class="t">{{ n[0] }}</span><Icon v-if="n[2]" n="navChev" /></div>
            </div>
            <div class="head"><span v-fit="66" class="t">Болезни</span></div>
            <div class="dark">
              <div class="card">
                <div class="tools">
                  <div class="btn sbtn"><Icon n="mag" /><Icon n="chevS" /></div><div class="inp" /><div class="btn go"><span v-fit="55" class="t">Выполнить</span></div>
                  <div class="btn actn"><span v-fit="48" class="t">Действия</span><Icon n="chevS" /></div>
                  <div class="btn exp"><span v-fit="106" class="t">Выгрузить в Excel</span></div>
                </div>
                <div class="filter"><Icon n="triD" /><Icon n="cbOn" class="m28" /><div class="blue"><Icon n="magW" /></div><div class="ft"><span v-fit="147" class="t">Текст строки содержит 'Бакт'</span></div><Icon n="rx" class="m15" /></div>
                <div class="tr th"><div class="c1" /><div class="c2"><span v-fit="59" class="t">Название</span></div><div class="c3"><span v-fit="141" class="t">Сокращенное название</span></div></div>
                <div v-for="d in diseases" :key="d[0]" class="tr">
                  <div class="c1"><Icon n="cb" /></div><div class="c2"><span v-fit="d[1]" class="t">{{ d[0] }}</span></div><div class="c3"><span v-fit="d[3]" class="t">{{ d[2] }}</span></div>
                </div>
                <div class="pg"><span v-fit="22" class="t">1 - 7</span></div>
              </div>
            </div>
            <div class="foot"><Icon n="mosLogo" /><div><p><span v-fit="173" class="t">Техническая поддержка:</span></p><p><span v-fit="286" class="t">+7 495 150-11-93 egfdm_support@mos.ru</span></p></div></div>
          </div>
          <div class="psb"><Icon n="sbUp" /><div class="pth" /><Icon n="sbDn" class="sbd" /></div>
        </div>
      </div>
      <div class="taskbar">
        <div v-for="a in apps" :key="a.n" class="app" :class="[a.c, { run: a.on }]">
          <Icon :n="a.n" /><span v-if="a.t" class="lt" :class="'lt-' + a.n">{{ a.t }}</span><span v-if="a.badge" class="badge">{{ a.badge }}</span>
        </div>
        <div class="tray">
          <div v-for="i in tray" :key="i" class="ti"><Icon :n="i" :w="['swirl', 'chrome', 'logi'].includes(i) ? 16 : 0" :h="['swirl', 'chrome', 'logi'].includes(i) ? 16 : 0" /></div>
          <span v-fit="22" class="t lang">РУС</span>
          <div class="clock"><span v-fit="27" class="t">14:15</span><span v-fit="54" class="t">21.10.2020</span></div>
          <div class="nt"><Icon n="notif" /><span class="n3">3</span></div>
          <div class="peek" />
        </div>
      </div>
    </div>
  </div>
</template>

<style>
html, body { background: #e6e6e6; overflow: hidden; }
</style>

<style scoped>
* { box-sizing: border-box; }
.desktop { display: flex; width: 3839px; height: 1079px; overflow: hidden; font: 12px/16px "Open Sans", "Noto Sans", sans-serif; color: #262626; }
.screen { display: flex; flex-direction: column; height: 1079px; flex: none; }
.left { width: 1920px; }
.right { width: 1919px; }
.t { display: inline-block; white-space: nowrap; transform-origin: 0 50%; flex: none; }
i, em { font-style: normal; }
s { width: 1px; height: 21px; background: #d0d0d0; flex: none; }
.m3 { margin-left: 3px; } .m4 { margin-left: 4px; } .m5 { margin-left: 5px; } .m6 { margin-left: 6px; }
.m7 { margin-left: 7px; } .m8 { margin-left: 8px; } .m9 { margin-left: 9px; } .m10 { margin-left: 10px; }
.m11 { margin-left: 11px; } .m13 { margin-left: 13px; } .m14 { margin-left: 14px; } .m15 { margin-left: 15px; }
.m16 { margin-left: 16px; } .m17 { margin-left: 17px; } .m18 { margin-left: 18px; } .m28 { margin-left: 28px; }

/* Excel window */
.excel { height: 1040px; display: flex; flex-direction: column; background: #e6e6e6; }
.titlebar { height: 34px; background: #217346; color: #fff; display: grid; grid-template-columns: 1fr 82px 1fr; align-items: center; }
.qat { display: flex; align-items: center; padding-left: 22px; }
.doc { display: flex; height: 32px; align-items: center; }
.win { display: flex; align-items: center; justify-content: flex-end; padding-right: 17px; height: 30px; align-self: start; }
.user { margin-left: 10px; position: relative; top: 1px; }
.ava { width: 24px; height: 24px; border-radius: 50%; background: #d0d0d0; color: #666; text-align: center; line-height: 24px; font-size: 11px; margin-left: 11px; }
.wbtns { display: flex; align-items: center; gap: 36px; margin-left: 28px; }
.tabs { height: 30px; background: #217346; color: #fff; display: flex; align-items: center; }
.tab { height: 30px; padding: 7px 13px 0 14px; }
.tab.first { padding: 7px 17px 0 15px; }
.tab.on { background: #f3f3f3; color: #217346; padding: 7px 13px 0 12px; }
.tell { display: flex; align-items: center; gap: 14px; margin-left: 16px; }
.share { display: flex; align-items: center; gap: 4px; margin-left: auto; margin-right: 25px; }

.ribbon { height: 93px; background: #f3f3f3; border-bottom: 1px solid #d2d2d2; display: flex; padding-top: 4px; flex: none; }
.grp { height: 84px; border-right: 1px solid #b4b4b4; flex: none; }
.g1 { width: 206px; } .g2 { width: 215px; } .g3 { width: 373px; } .g4 { width: 147px; } .g5 { width: 452px; } .g6 { width: 166px; } .g7 { width: 256px; }
.body { height: 72px; display: flex; }
.col { display: flex; flex-direction: column; }
.lab { height: 12px; line-height: 16px; display: grid; grid-template-columns: 1fr 9px; padding-right: 3px; justify-items: center; align-items: start; color: #333; }
.lab.nl { grid-template-columns: 1fr; padding: 0; }
.la { margin-top: 4px; }
.collapse { margin-left: auto; margin-right: 7px; align-self: flex-end; padding-bottom: 4px; }
.big { display: flex; flex-direction: column; align-items: center; padding-top: 4px; flex: none; }
.ico { height: 33px; display: flex; }
.arr { height: 14px; display: flex; align-items: center; }
.two { display: flex; align-items: center; }
.paste { width: 48px; margin-left: 10px; }
.stack { margin-left: 5px; }
.row { height: 23px; display: flex; align-items: center; }
.si { width: 20px; display: flex; padding-left: 1px; }
.line { display: flex; align-items: center; height: 23px; }
.l1 { margin-top: 7px; }
.l2 { margin-top: 8px; }
.combo { height: 23px; background: #fff; border: 1px solid #bdbdbd; display: flex; align-items: center; justify-content: space-between; padding: 0 3px 0 2px; }
.c1.combo { width: 104px; margin-left: 8px; }
.c2.combo { width: 52px; margin-left: -1px; }
.c3.combo { width: 131px; margin-left: 8px; }
.biga { font: 15px/22px "Open Sans", sans-serif; color: #555; display: flex; margin-left: 6px; width: 22px; }
.biga.sm { font-size: 13px; margin-left: 1px; }
.biga i { font-size: 6px; line-height: 10px; color: #3f78b5; }
.fb { font: bold 14px/20px "Open Sans", sans-serif; color: #4c4c4c; }
.w23 { width: 23px; } .w22 { width: 22px; } .w18 { width: 18px; }
.w23 { margin-left: 12px; }
.it { font-style: italic; }
.un { text-decoration: underline; }
.fc { font: bold 14px/13px "Open Sans", sans-serif; color: #555; border-bottom: 4px solid red; width: 16px; text-align: center; margin-left: 5px; height: 17px; }
.alg { padding-left: 7px; width: 130px; }
.ab { width: 22px; height: 23px; display: flex; align-items: center; justify-content: center; flex: none; }
.ab.upper { padding-bottom: 8px; }
.ab.sel { background: #c6c6c6; padding-top: 8px; }
.ori { position: relative; width: 16px; margin-left: 8px; }
.ori em { position: absolute; left: -2px; top: -4px; font-size: 10px; line-height: 12px; transform: rotate(-45deg); color: #555; }
.tall { height: 55px; margin-top: 6px; }
.wrp { width: 18px; display: grid; font-size: 11px; line-height: 9px; grid-template-columns: 7px 11px; color: #555; height: 20px; }
.wrp em:first-child { grid-column: 1 / 3; }
.pct { font-size: 17px; color: #555; margin-left: 9px; }
.ooo { font-size: 10px; color: #555; margin-left: 7px; font-weight: 600; }
.dec { font-size: 9px; line-height: 9px; margin-left: 6px; width: 16px; text-align: right; color: #555; white-space: nowrap; }
.dec i { color: #3f78b5; font-weight: bold; font-family: "DejaVu Sans", sans-serif; }
.dec.d2 { margin-left: 6px; }
.b1 { width: 104px; margin-left: 10px; }
.b2 { width: 87px; margin-left: 5px; }
.gallery { width: 231px; height: 61px; margin: 2px 0 0 4px; background: #fff; border: 1px solid #c6c6c6; display: flex; justify-content: space-between; flex: none; }
.styles { display: grid; grid-template-columns: 106px 100px; grid-template-rows: 27px 22px; gap: 3px; padding-top: 2px; font-size: 15px; }
.st { padding-left: 4px; line-height: 22px; height: 22px; margin-top: 3px; }
.st.normal { border: 3px solid #c3c3c3; height: 28px; margin: 0; color: #000; padding-left: 4px; }
.st.neutral { background: #ffeb9c; color: #9c6500; }
.st.bad { background: #ffc7ce; color: #9c0006; margin: 1px 3px 0; }
.st.good { background: #c6efce; color: #006100; margin-top: 1px; }
.gs { width: 16px; display: flex; flex-direction: column; margin: -1px; }
.gs div { height: 21px; margin-bottom: -1px; border: 1px solid #b4b4b4; display: flex; justify-content: center; align-items: center; background: #f3f3f3; }
.gs .more { height: 23px; padding-top: 4px; box-shadow: inset 0 4px 0 #f3f3f3, inset 0 5px 0 #555; }
.w48 { width: 48px; margin-left: 10px; } .w44 { width: 44px; margin-left: 5px; } .w43 { width: 43px; margin-left: 5px; }
.s7 { margin-left: 10px; width: 98px; }
.b3 { width: 66px; margin-left: 6px; } .b4 { width: 60px; margin-left: 5px; }
.srt { position: relative; }
.srt em { position: absolute; left: 0; top: 0; font: bold 14px/16px "Open Sans", sans-serif; color: #3f78b5; }
.srt em + em { top: 14px; color: #9b5fbe; }

.fbar { height: 46px; display: flex; align-items: flex-start; padding: 10px 5px 0; flex: none; }
.fbar > div { height: 26px; }
.name { width: 102px; background: #fdfdfd; border: 1px solid #c0c0c0; display: flex; align-items: center; justify-content: space-between; padding: 0 6px; font-size: 13px; color: #444; }
.vdots { display: flex; flex-direction: column; justify-content: center; gap: 3px; margin-left: 13px; width: 2px; }
.vdots u { width: 2px; height: 2px; background: #a8a8a8; }
.fbtns { margin-left: 15px; width: 110px; background: #fdfdfd; border: 1px solid #c0c0c0; display: flex; align-items: center; padding-left: 13px; gap: 24px; }
.fx { font: italic 16px/20px "Liberation Serif", serif; color: #444; }
.fx small { font-size: 12px; }
.finput { margin-left: 3px; flex: 1; background: #fdfdfd; border: 1px solid #c0c0c0; display: flex; justify-content: flex-end; align-items: center; padding-right: 3px; }

.gridwrap { display: flex; height: 788px; flex: none; }
.grid { width: 1899px; height: 788px; overflow: hidden; border-right: 1px solid #999; border-bottom: 1px solid #999; background: #fff; font-family: "Lato", "Open Sans", sans-serif; font-size: 14px; color: #000; }
.hrow { display: flex; height: 20px; background: #e6e6e6; border-bottom: 1px solid #999; }
.cnr { width: 26px; flex: none; border-right: 1px solid #b0b0b0; display: flex; justify-content: flex-end; align-items: flex-end; padding: 0 3px 3px 0; }
.hc { width: 64px; flex: none; text-align: center; line-height: 19px; border-right: 1px solid #b5b5b5; color: #222; }
.hc.sel { background: #d2d2d2; color: #217346; box-shadow: inset 0 -1px #217346, 0 1px #217346; position: relative; }
.kA { width: 292px !important; }
.kB { width: 161px !important; }
.grow { display: flex; height: 20px; }
.rh { width: 26px; flex: none; background: #e6e6e6; border-right: 1px solid #999; border-bottom: 1px solid #b5b5b5; text-align: center; line-height: 21px; font-size: 13px; color: #222; }
.rh.sel { background: #d2d2d2; color: #217346; border-right: 2px solid #217346; }
.cell { width: 64px; flex: none; border-right: 1px solid #d4d4d4; border-bottom: 1px solid #d4d4d4; padding-left: 2px; line-height: 21px; font-size: 13.5px; position: relative; }
.rest { flex: 1; border-right: 0; }
.cursor { position: absolute; left: -2px; top: -2px; width: 67px; height: 23px; border: 2px solid #217346; }
.cursor::after { content: ""; position: absolute; right: -3px; bottom: -3px; width: 5px; height: 5px; background: #217346; box-shadow: -1px -1px #fff; }
.vs { margin: 3px 0 1px 3px; width: 15px; display: flex; flex-direction: column; background: #dadada; }
.sb { border: 1px solid #b0b0b0; background: #fff; display: flex; align-items: center; justify-content: center; flex: none; }
.vs .sb { height: 15px; }
.vthumb { height: 680px; margin-top: -1px; background: #fff; border: 1px solid #b0b0b0; }
.vtrack { flex: 1; }

.sheets { height: 28px; display: flex; border-bottom: 1px solid #c6c6c6; flex: none; align-items: flex-start; }
.nv1 { margin: 9px 0 0 27px; } .nv2 { margin: 9px 0 0 25px; }
.stab { margin: -1px 0 0 40px; width: 69px; height: 25px; background: #fff; border: solid #999; border-width: 0 1px; border-bottom: 2px solid #217346; padding: 5px 0 0 11px; color: #217346; font-weight: bold; z-index: 1; }
.plusc { margin: 5px 0 0 32px; }
.hd { margin: 6px 0 0 934px; height: 14px; }
.hs { display: flex; height: 15px; margin: 6px 0 0 15px; width: 730px; background: #dadada; }
.hs .sb { width: 15px; }
.hthumb { width: 671px; margin-left: -1px; background: #fff; border: 1px solid #b0b0b0; }
.htrack { flex: 1; }
.status { flex: 1; background: #f3f3f3; display: flex; align-items: center; padding-left: 7px; font-size: 12px; }
.views { display: flex; height: 100%; margin-left: 1574px; }
.views div { width: 39.500px; display: flex; align-items: center; justify-content: center; }
.views .on { background: #c6c6c6; }
.pm { font-size: 16px; width: 12px; text-align: center; margin-left: 4px; }
.slider { width: 101px; height: 1px; background: #a8a8a8; display: flex; justify-content: center; align-items: center; }
.slider u { width: 5px; height: 11px; background: #666; flex: none; }
.pm + .slider { margin-left: 3px; margin-right: -3px; }
.zm { margin-left: 10px; }

/* Taskbar */
.taskbar { height: 39px; flex: none; display: flex; background: linear-gradient(90deg, #184f6c 0, #164c69 50%, #10425f 62%, #0a335f 80%, #0a2b64 100%); color: #fff; }
.app { width: 49px; height: 39px; display: flex; align-items: center; justify-content: center; flex: none; position: relative; }
.app.run { background: linear-gradient(#8cc4f0, #8cc4f0) 5px 37px / 40px 2px no-repeat; }
.app.run.multi { background: linear-gradient(#8cc4f0, #8cc4f0) 5px 37px / 31px 2px no-repeat, linear-gradient(#6f97b4, #6f97b4) 37px 37px / 8px 2px no-repeat; }
.app.alert { background: #8a6d52; border-bottom: 2px solid #ff8000; }
.app.current { background: #0c5b9c; border-bottom: 2px solid #8cc4f0; width: 44px; margin-left: 2px; }
.lt { position: absolute; font: bold 9px/11px "Open Sans", sans-serif; color: #fff; }
.lt-word { left: 14px; top: 14px; } .lt-excel { left: 13px; top: 13px; font-size: 10px; } .lt-ij { left: 19px; top: 12px; font-size: 8px; }
.badge { position: absolute; left: 27px; top: 17px; font-size: 11px; line-height: 14px; }
.clock { display: flex; flex-direction: column; align-items: center; line-height: 19px; width: 54px; }
.clock .t:first-child { line-height: 20px; }
.end { margin-left: auto; margin-right: 6px; }
.tray { margin-left: auto; display: flex; align-items: center; height: 39px; }
.ti { width: 24px; display: flex; justify-content: center; }
.lang { margin-left: 7px; }
.tray .clock { margin-left: 13px; }
.nt { position: relative; margin-left: 18px; }
.n3 { position: absolute; left: 8px; top: 5px; width: 17px; height: 17px; border-radius: 50%; background: #10589a; border: 1px solid #6f9cc4; font-size: 11px; line-height: 15px; text-align: center; }
.peek { width: 1px; height: 39px; background: #5f7ea4; margin: 0 3px 0 20px; }

/* Browser window */
.chrome { height: 1040px; display: flex; flex-direction: column; }
.strip { height: 34px; display: flex; background: linear-gradient(180deg, rgba(150, 178, 195, .35), rgba(180, 210, 225, .1)), linear-gradient(90deg, #93afba 0, #93b2c0 50%, #9fcfe4 55%, #a3d8f0 61%, #9fcbe0 66%, #a0cbe2 67%, #a3d5ee 70%, #96b3c3 78%, #a5d3ea 84%, #aee0f8 91%, #9fc6da 100%); color: #1d3340; }
.ct { height: 34px; display: flex; align-items: center; background: linear-gradient(#8ccae0, #76bbd5); flex: none; border-radius: 8px 8px 0 0; }
.ct .x { margin-left: auto; }
.ct.a { width: 239px; margin-left: 8px; padding: 0 10px 0 13px; border-right: 1px solid #5f8fa3; }
.ct.b { width: 238px; padding: 0 10px 0 12px; border-radius: 0 8px 8px 0; }
.ct.act { width: 241px; background: linear-gradient(#307b9f, #3682a3); color: #fff; padding: 0 12px 0 13px; }
.ct.d { width: 239px; padding: 0 12px 0 12px; border-radius: 8px; }
.clip { margin-left: 9px; display: block; }
.w175 { width: 175px; -webkit-mask: linear-gradient(90deg, #000 88%, transparent); mask: linear-gradient(90deg, #000 88%, transparent); }
.w177 { width: 177px; -webkit-mask: linear-gradient(90deg, #000 88%, transparent); mask: linear-gradient(90deg, #000 88%, transparent); }
.newtab { width: 28px; height: 28px; border-radius: 50%; background: #7dbfd6; display: flex; align-items: center; justify-content: center; margin: 3px 0 0 8px; }
.wb { margin-left: auto; display: flex; height: 29px; gap: 1px; }
.wb div { width: 45px; background: linear-gradient(#88c8df, #76bbd5); display: flex; align-items: center; justify-content: center; }
.bar { height: 37px; border-bottom: 1px solid #0c0f14; background: linear-gradient(#3581a2, #3c89aa); display: flex; align-items: center; padding-left: 15px; flex: none; }
.url { width: 1640px; height: 28px; border-radius: 14px; background: #252c2f; margin-left: 15px; display: flex; align-items: center; padding: 0 11px; color: #fff; font-size: 13.5px; flex: none; }
.url s { height: 16px; background: #6b7275; margin: 0 9px 0 8px; }
.ns { margin-left: 9px; color: #e6e8e8; }
.path { color: #8f979a; }
.star { margin-left: auto; }
.prof { width: 22px; height: 22px; border-radius: 50%; background: #004d40; color: #fff; margin-left: 13px; text-align: center; line-height: 22px; }
.view { display: flex; height: 969px; }
.page { width: 1903px; display: flex; flex-direction: column; font-family: "Roboto Condensed", Roboto, sans-serif; }
.top { height: 60px; background: linear-gradient(#40404a, #13141a 50%, #000 95%); display: flex; align-items: center; padding-left: 12px; color: #fff; flex: none; }
.ttl { font-size: 22px; font-weight: 500; margin-left: 12px; }
.when { display: flex; flex-direction: column; margin-left: 538px; height: 60px; }
.tm { font-size: 28px; line-height: 30px; color: #333335; height: 35px; padding-top: 6px; }
.dt { font-size: 14px; line-height: 20px; color: #d0d0d4; font-weight: 500; }
.usr { margin-left: auto; margin-right: 15px; display: flex; align-items: center; font-size: 14.5px; font-weight: 500; }
.usr svg { margin-left: 29px; }
.usr svg:nth-of-type(2) { margin: 0 3px 0 32px; }
.usr svg:nth-of-type(3) { margin-right: 5px; }
.nav { height: 56px; background: #21242f; display: flex; flex: none; font-size: 16.5px; color: #b9bac6; }
.ni { margin-left: 5px; padding: 0 22px 5px 23px; display: flex; align-items: center; flex: none; }
.nav .ni:first-child { margin-left: 0; }
.ni.ch { padding-right: 14px; }
.ni svg { margin-left: 14px; }
.ni.on { background: #1c1e29; color: #fff; font-weight: 500; border-bottom: 4px solid red; padding-bottom: 1px; }
.head { height: 64px; background: #fff; border-bottom: 1px solid #dcdfe0; padding: 20px 0 0 18px; font-size: 18px; line-height: 24px; font-weight: 600; color: #404040; flex: none; }
.dark { height: 715px; flex: none; padding: 10px 12px; background:
  radial-gradient(ellipse 60px 130px at 1430px 630px, rgba(64, 46, 38, .4), transparent),
  radial-gradient(ellipse 50px 90px at 1530px 600px, rgba(64, 42, 38, .4), transparent),
  radial-gradient(ellipse 100px 60px at 1600px 470px, rgba(50, 50, 40, .5), transparent),
  radial-gradient(ellipse 80px 50px at 1700px 470px, rgba(50, 60, 75, .5), transparent),
  radial-gradient(ellipse 110px 60px at 1840px 520px, rgba(50, 60, 72, .4), transparent),
  radial-gradient(ellipse 70px 130px at 980px 640px, rgba(60, 45, 30, .35), transparent),
  radial-gradient(ellipse 300px 60px at 1150px 540px, rgba(30, 48, 56, .35), transparent),
  radial-gradient(ellipse 60px 120px at 390px 660px, rgba(60, 42, 36, .35), transparent),
  radial-gradient(ellipse 60px 90px at 580px 640px, rgba(55, 40, 32, .3), transparent),
  radial-gradient(ellipse 60px 90px at 780px 590px, rgba(55, 40, 35, .35), transparent),
  linear-gradient(#222939 0, #1c1e2a 50%, #191c27 70%, #151822 100%); }
.card { height: 439px; background: #fff; border: 1px solid #e0e0e0; border-radius: 2px; display: flex; flex-direction: column; color: #404040; }
.tools { height: 54px; background: linear-gradient(#fff, #efefef); display: flex; align-items: flex-start; padding: 8px 8px 0; font-size: 12.500px; flex: none; }
.btn { height: 32px; border: 1px solid #dcdcdc; background: #f8f8f8; display: flex; align-items: center; justify-content: center; border-radius: 2px; flex: none; }
.sbtn { width: 56px; gap: 5px; }
.inp { width: 212px; height: 32px; background: #fff; border: solid #dcdcdc; border-width: 1px 0; }
.go { width: 80px; font-weight: 700; font-size: 12px; color: #333; }
.actn { width: 87px; margin-left: 4px; gap: 4px; }
.exp { width: 137px; height: 38px; margin-left: auto; font-size: 14.5px; }
.filter { height: 50px; background: #fafafa; border-bottom: 1px solid #e4e4e4; display: flex; align-items: center; padding-left: 20px; flex: none; font-size: 12.500px; }
.blue { width: 33px; height: 32px; background: #4aa3eb; margin-left: 8px; display: flex; align-items: center; justify-content: center; }
.ft { width: 300px; height: 32px; background: #fff; border: 1px solid #ececec; padding: 7px 0 0 8px; }
.tr { display: flex; height: 36px; border-bottom: 1px solid #efefef; font-size: 14.5px; flex: none; }
.tr > div { display: flex; align-items: center; padding-bottom: 2px; }
.tr .c1 { width: 142px; justify-content: center; border-right: 1px solid #efefef; padding-bottom: 5px; padding-right: 1px; }
.tr .c2 { width: 1106px; border-right: 1px solid #ececec; padding-left: 12px; }
.tr .c3 { flex: 1; padding-left: 13px; }
.tr.th { height: 45px; background: #fafafa; font-weight: 700; font-size: 13.5px; color: #333; }
.th > div { justify-content: center; padding: 0 !important; }
.pg { padding: 10px 20px 0 0; text-align: right; color: #777; font-size: 13px; }
.foot { flex: 1; background: #e6e6e6; display: flex; padding: 12px 0 0 12px; gap: 37px; font-size: 17px; color: #404040; }
.foot p { margin: 0; height: 30px; line-height: 26px; }
.psb { width: 16px; background: #f1f1f1; display: flex; flex-direction: column; align-items: center; padding-top: 7px; }
.pth { width: 13px; height: 907px; background: #c1c1c1; margin-top: 5px; flex: none; }
.sbd { margin-top: 34px; }
</style>
